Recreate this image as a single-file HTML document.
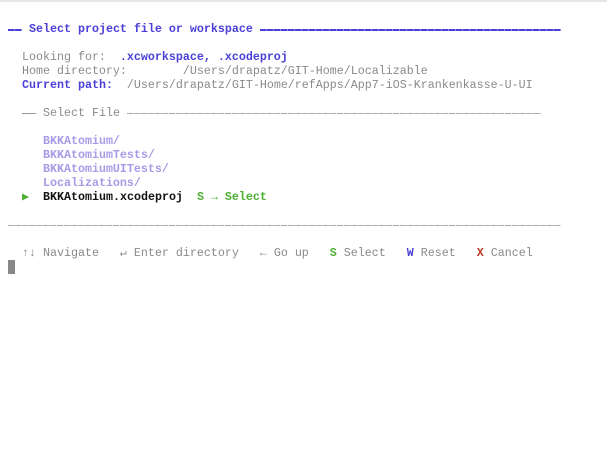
<!DOCTYPE html>
<html><head><meta charset="utf-8"><style>
html,body{margin:0;padding:0;background:#fff;width:607px;height:471px;overflow:hidden}
body{border-top:2px solid #e6e6e6;box-sizing:border-box}
pre{margin:0;position:absolute;left:8px;top:22px;font-family:"Liberation Mono","DejaVu Sans Mono",monospace;font-size:11.67px;line-height:14px;color:#8a8a8a;white-space:pre}
.b{color:#4a3fd8;font-weight:bold}
.p{color:#a99ae8;font-weight:bold}
.k{color:#111;font-weight:bold}
.g{color:#4caf32;font-weight:bold}
.r{color:#b83a25;font-weight:bold}
.ln{display:inline-block;vertical-align:top;margin-top:7px}
.bl{height:2px;background:repeating-linear-gradient(90deg,#4a3fd8 0 6px,#8d85e6 6px 7px)}
.gl{height:1px;background:repeating-linear-gradient(90deg,#aaa 0 6px,#ddd 6px 7px)}
.cur{display:inline-block;width:7px;height:14px;background:#888;vertical-align:top}
</style></head><body>
<pre><span class="ln bl" style="width:14px"></span> <span class="b">Select project file or workspace</span> <span class="ln bl" style="width:301px"></span>

  Looking for:  <span class="b">.xcworkspace, .xcodeproj</span>
  Home directory:        /Users/drapatz/GIT-Home/Localizable
  <span class="b">Current path:</span>  /Users/drapatz/GIT-Home/refApps/App7-iOS-Krankenkasse-U-UI

  <span class="ln gl" style="width:14px;background:#999"></span> Select File <span class="ln gl" style="width:414px"></span>

     <span class="p">BKKAtomium/</span>
     <span class="p">BKKAtomiumTests/</span>
     <span class="p">BKKAtomiumUITests/</span>
     <span class="p">Localizations/</span>
  <span class="g">▶</span>  <span class="k">BKKAtomium.xcodeproj</span>  <span class="g">S → Select</span>

<span class="ln gl" style="width:553px"></span>

  ↑↓ Navigate   ↵ Enter directory   ← Go up   <span class="g">S</span> Select   <span class="b">W</span> Reset   <span class="r">X</span> Cancel
<span class="cur"></span></pre>
</body></html>
